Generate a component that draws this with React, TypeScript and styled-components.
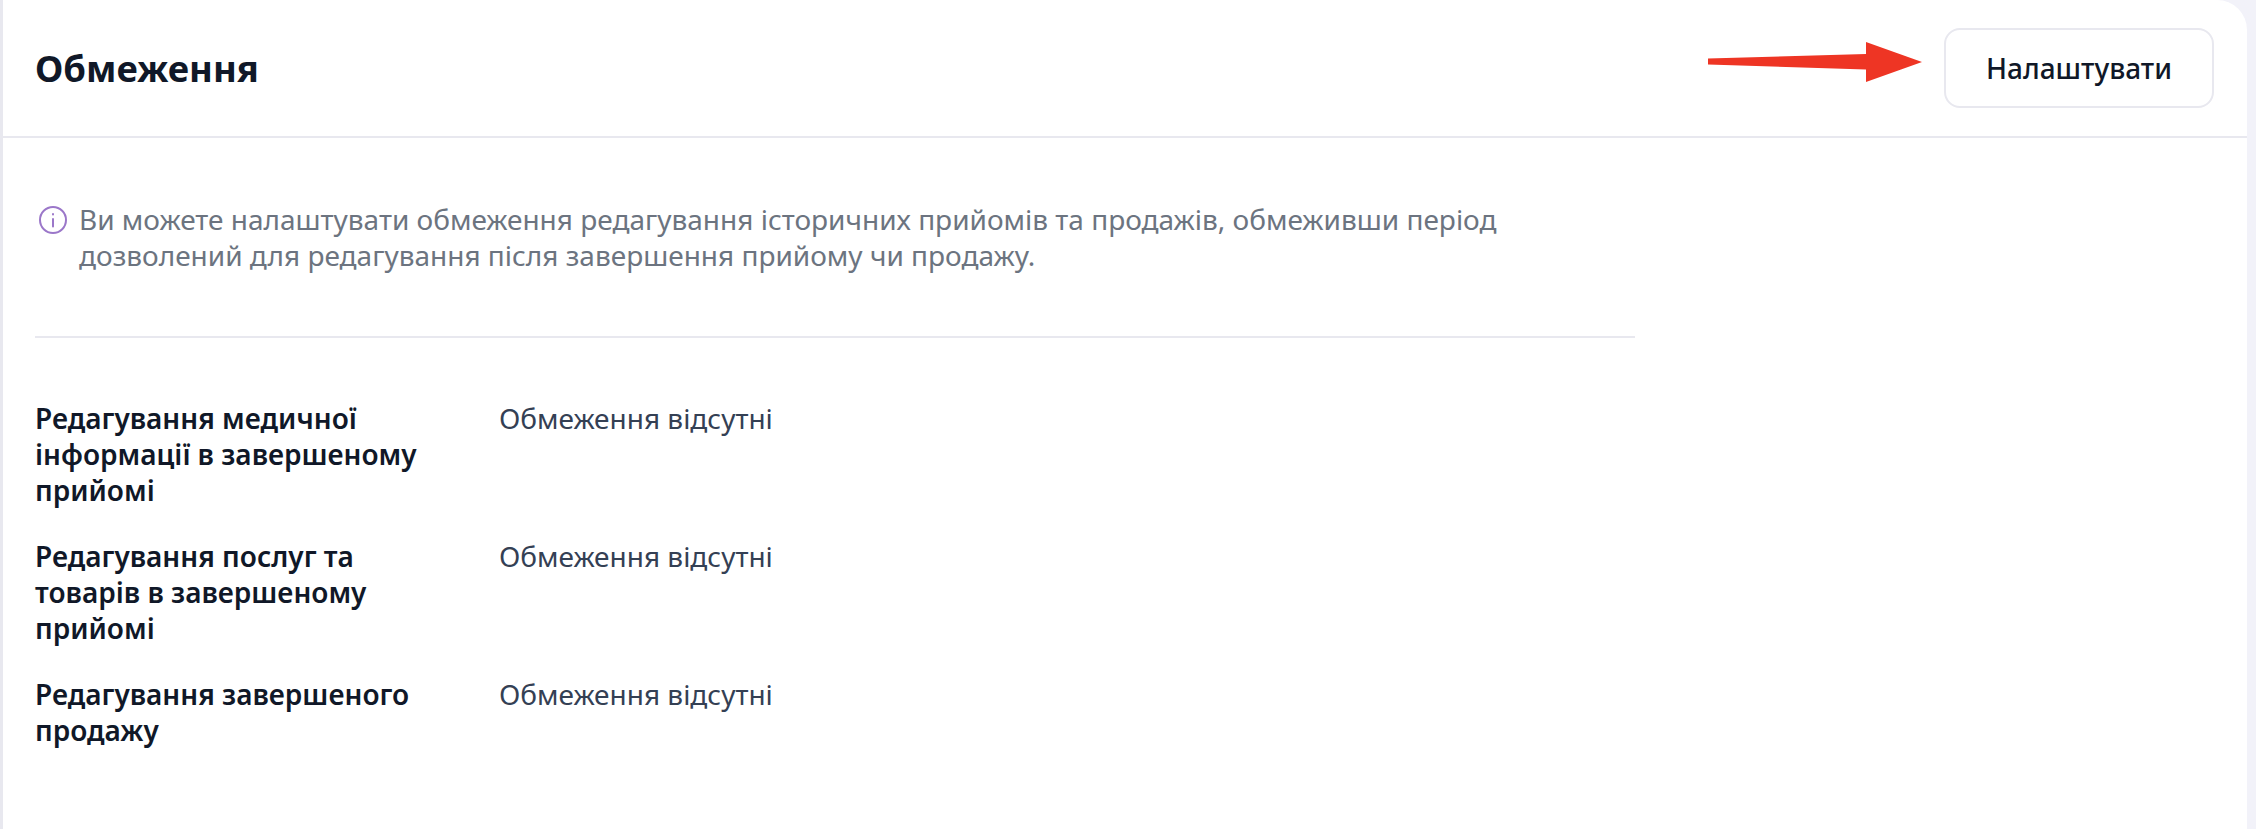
import * as React from 'react';
import styled, { createGlobalStyle } from 'styled-components';

const GlobalStyle = createGlobalStyle`
  html, body {
    margin: 0;
    padding: 0;
    height: 100%;
    background: #f2f2f9;
    overflow: hidden;
  }
  body {
    font-family: 'Noto Sans', 'Open Sans', sans-serif;
  }
`;

const Card = styled.div`
  box-sizing: border-box;
  width: 2247px;
  height: 829px;
  background: #fff;
  border-left: 3px solid #e8e8ef;
  border-top-right-radius: 30px;
`;

const Header = styled.div`
  box-sizing: border-box;
  height: 138px;
  display: flex;
  align-items: center;
  justify-content: space-between;
  padding: 0 33px 0 32px;
  border-bottom: 2px solid #e8e8ef;
`;

const Title = styled.h1`
  margin: 0;
  font-size: 36.4px;
  line-height: 44px;
  font-weight: 700;
  color: #101828;
`;

const Actions = styled.div`
  display: flex;
  align-items: center;
  gap: 22px;
`;

const ArrowMark = styled.svg`
  flex: none;
  width: 214px;
  height: 40px;
  margin-bottom: 12px;
`;

const SetupButton = styled.button`
  box-sizing: border-box;
  width: 270px;
  height: 80px;
  background: #fff;
  border: 2px solid #e8e8ef;
  border-radius: 16px;
  font-family: inherit;
  font-size: 28px;
  font-weight: 500;
  color: #101828;
`;

const Body = styled.div`
  width: 1600px;
  padding: 63px 0 0 32px;
`;

const Notice = styled.div`
  display: flex;
  gap: 11px;
  padding-bottom: 63px;
  border-bottom: 2px solid #e8e8ef;
  font-size: 28px;
  line-height: 36px;
  color: #6c7480;
`;

const NoticeIcon = styled.svg`
  flex: none;
  width: 30px;
  height: 30px;
  margin: 4px 0 0 3px;
`;

const Rows = styled.div`
  display: flex;
  flex-direction: column;
  gap: 30px;
  padding-top: 62px;
`;

const Row = styled.div`
  display: grid;
  grid-template-columns: 387px 1fr;
  gap: 77px;
  font-size: 28px;
  line-height: 36px;
`;

const Label = styled.div`
  font-weight: 600;
  color: #101828;
`;

const Value = styled.div`
  color: #344054;
`;

const rows = [
  'Редагування медичної інформації в завершеному прийомі',
  'Редагування послуг та товарів в завершеному прийомі',
  'Редагування завершеного продажу',
];

export default function App() {
  return (
    <>
      <GlobalStyle />
      <Card>
        <Header>
          <Title>Обмеження</Title>
          <Actions>
            <ArrowMark viewBox="0 0 214 40">
              <path d="M0 16.5 L158 12 L158 0 L214 20 L158 40 L158 27.5 L0 22.5 Z" fill="#ee3524" />
            </ArrowMark>
            <SetupButton>Налаштувати</SetupButton>
          </Actions>
        </Header>
        <Body>
          <Notice>
            <NoticeIcon viewBox="0 0 30 30" fill="none" stroke="#9b77c9" strokeWidth="2" strokeLinecap="round">
              <circle cx="15" cy="15" r="13" />
              <path d="M15 14v7.5" />
              <path d="M15 9v.5" />
            </NoticeIcon>
            <div>
              Ви можете налаштувати обмеження редагування історичних прийомів та продажів, обмеживши період
              <br />
              дозволений для редагування після завершення прийому чи продажу.
            </div>
          </Notice>
          <Rows>
            {rows.map((label) => (
              <Row key={label}>
                <Label>{label}</Label>
                <Value>Обмеження відсутні</Value>
              </Row>
            ))}
          </Rows>
        </Body>
      </Card>
    </>
  );
}
